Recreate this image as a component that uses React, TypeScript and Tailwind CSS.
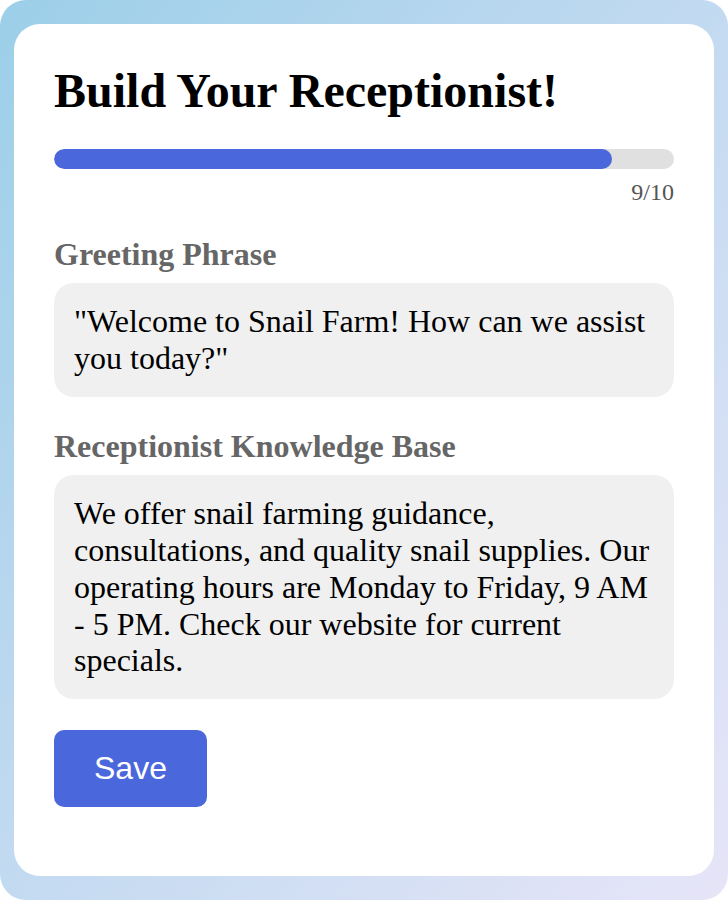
export default function App() {
  const step = 9;
  const total = 10;

  return (
    <div className="w-[728px] h-[900px] rounded-[26px] bg-gradient-to-br from-[#9ccfe9] to-[#e7e5f8] px-[14px] py-[24px] flex font-['Liberation_Serif',serif]">
      <div className="flex-1 bg-white rounded-[26px] p-[40px] flex flex-col items-start">
        <h1 className="text-[48px] font-bold leading-[1.107] text-black">Build Your Receptionist!</h1>

        <div className="w-full mt-[32px] h-[20px] rounded-full bg-[#e0e0e0] overflow-hidden">
          <div className="h-full rounded-full bg-[#4a68db]" style={{ width: `${(step / total) * 100}%` }} />
        </div>
        <div className="w-full text-right mt-[10px] text-[24px] leading-[1.107] text-[#555]">
          {step}/{total}
        </div>

        <label className="mt-[31px] mb-[11px] text-[32px] leading-[1.107] font-bold text-[#666]">Greeting Phrase</label>
        <div className="w-full bg-[#f0f0f0] rounded-[20px] p-[20px] text-[32px] leading-[1.15] text-black">
          "Welcome to Snail Farm! How can we assist you today?"
        </div>

        <label className="mt-[32px] mb-[11px] text-[32px] leading-[1.107] font-bold text-[#666]">
          Receptionist Knowledge Base
        </label>
        <div className="w-full bg-[#f0f0f0] rounded-[20px] p-[20px] text-[32px] leading-[1.15] text-black">
          We offer snail farming guidance, consultations, and quality snail supplies. Our operating hours are Monday to
          Friday, 9 AM - 5 PM. Check our website for current specials.
        </div>

        <button className="mt-[31px] bg-[#4a68db] text-white rounded-[10px] px-[40px] py-[20px] text-[32px] leading-[1.15] font-['Liberation_Sans',sans-serif]">
          Save
        </button>
      </div>
    </div>
  );
}
